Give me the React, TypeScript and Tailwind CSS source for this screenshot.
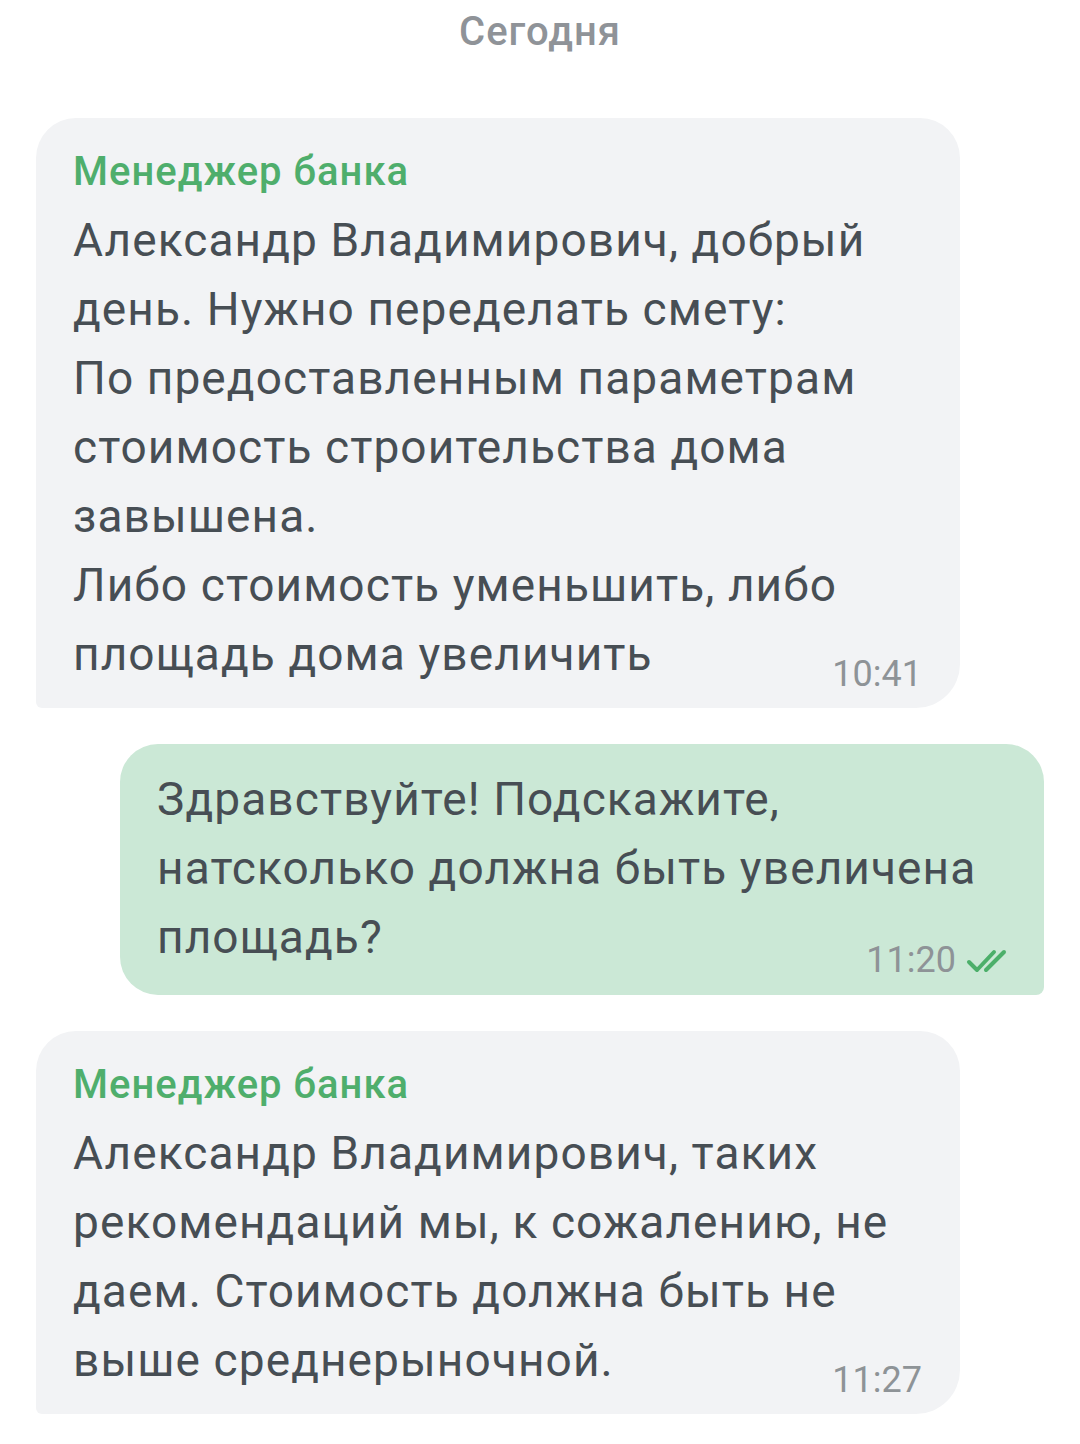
import React from "react";

function DoubleCheck() {
  return (
    <svg width="44" height="26" viewBox="0 0 44 26" fill="none" className="ml-[8px] mt-[2px]">
      <path d="M5 14l8 8L30 4" stroke="#4caf6a" strokeWidth="4" strokeLinecap="round" strokeLinejoin="round" />
      <path d="M22 22L40 4" stroke="#4caf6a" strokeWidth="4" strokeLinecap="round" />
    </svg>
  );
}

function Incoming({ lines, time }: { lines: string[]; time: string }) {
  return (
    <div className="w-[924px] bg-[#f2f3f5] rounded-t-[40px] rounded-br-[44px] rounded-bl-[6px] pl-[37px] pr-[38px] pt-[30px] pb-[14px]">
      <div className="text-[40px] leading-[48px] font-medium tracking-[1px] text-[#4fae6c]">Менеджер банка</div>
      <div className="mt-[10px] text-[46px] leading-[69px] tracking-[1.1px] text-[#474e54]">
        {lines.map((l, i) => (
          <div key={i}>{l}</div>
        ))}
      </div>
      <div className="flex justify-end -mt-[35px] text-[36px] leading-[40px] text-[#8e9397]">{time}</div>
    </div>
  );
}

export default function App() {
  return (
    <div className="w-[1080px] min-h-[1444px] bg-white font-['Roboto',sans-serif] flex flex-col">
      <div className="h-[64px] flex items-center justify-center text-[40px] tracking-[1px] font-medium text-[#8f9398]">
        Сегодня
      </div>

      <div className="flex flex-col gap-[36px] pt-[54px]">
        <div className="pl-[36px]">
          <Incoming
            time="10:41"
            lines={[
              "Александр Владимирович, добрый",
              "день. Нужно переделать смету:",
              "По предоставленным параметрам",
              "стоимость строительства дома",
              "завышена.",
              "Либо стоимость уменьшить, либо",
              "площадь дома увеличить",
            ]}
          />
        </div>

        <div className="pl-[120px]">
          <div className="w-[924px] bg-[#cbe8d6] rounded-t-[38px] rounded-bl-[38px] rounded-br-[8px] pl-[37px] pr-[36px] pt-[21px] pb-[15px]">
            <div className="text-[46px] leading-[69px] tracking-[1.1px] text-[#474e54]">
              <div>Здравствуйте! Подскажите,</div>
              <div>натсколько должна быть увеличена</div>
              <div>площадь?</div>
            </div>
            <div className="flex justify-end items-center -mt-[32px] text-[36px] leading-[40px] text-[#8e9397]">
              11:20
              <DoubleCheck />
            </div>
          </div>
        </div>

        <div className="pl-[36px]">
          <Incoming
            time="11:27"
            lines={[
              "Александр Владимирович, таких",
              "рекомендаций мы, к сожалению, не",
              "даем. Стоимость должна быть не",
              "выше среднерыночной.",
            ]}
          />
        </div>
      </div>
    </div>
  );
}
